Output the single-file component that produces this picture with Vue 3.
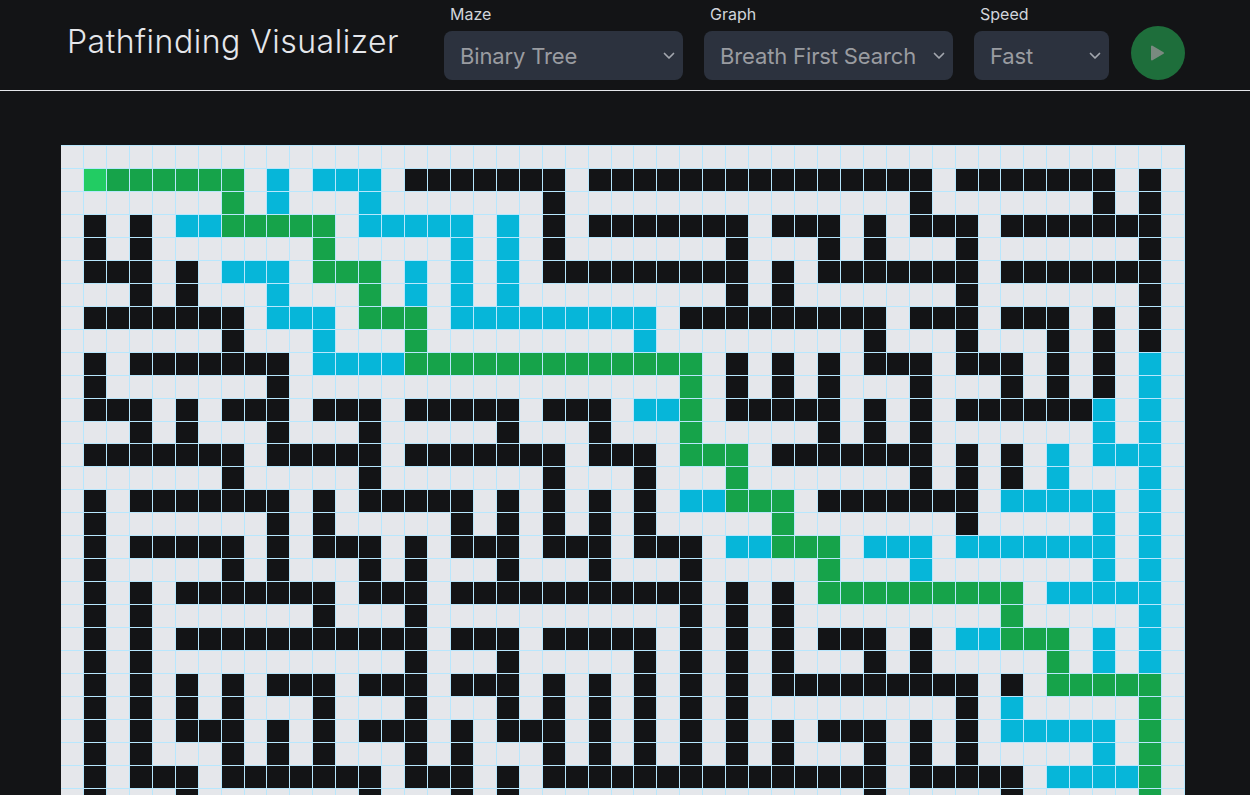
<script setup>
const COLS = 49;

// each visible row lists its wall / path / visited cells as column ranges
const rowData = [
  {},
  { w: "15-21,23-37,39-45,47", g: "2-7", b: "9,11-13" },
  { w: "21,37,45,47", g: "7", b: "9,13" },
  { w: "1,3,21,23-29,31-33,35,37-39,41-47", g: "7-11", b: "5,6,13-17,19" },
  { w: "1,3,21,29,33,35,39,47", g: "11", b: "17,19" },
  { w: "1-3,5,21-29,31,33-39,41-47", g: "11-13", b: "7-9,15,17,19" },
  { w: "3,5,29,31,39,47", g: "13", b: "9,15,17,19" },
  { w: "1-7,27-35,37-39,41-43,45,47", g: "13-15", b: "9-11,17-25" },
  { w: "7,35,39,43,45,47", g: "15", b: "11,25" },
  { w: "1,3-9,29,31,33,35-37,39-41,43,45", g: "15-27", b: "11-14,47" },
  { w: "1,9,29,31,33,37,41,43,45", g: "27", b: "47" },
  { w: "1-3,5,7-9,11-13,15-19,21-23,29-33,35,37,39-44", g: "27", b: "25,26,45,47" },
  { w: "3,5,9,13,19,23,33,35,37", g: "27", b: "45,47" },
  { w: "1-7,9-13,15-21,23-25,31-37,39,41", g: "27-29", b: "43,45-47" },
  { w: "7,13,21,25,37,39,41", g: "29", b: "43,47" },
  { w: "1,3-9,11,13-17,19,21,23,25,33-39", g: "29-31", b: "27,28,41-45,47" },
  { w: "1,9,11,17,19,21,23,25,39", g: "31", b: "45,47" },
  { w: "1,3-7,9,11-13,15,17-19,21-23,25-27", g: "31-33", b: "29,30,35-37,39-45,47" },
  { w: "1,7,9,13,15,19,23,27", g: "33", b: "37,45,47" },
  { w: "1,3,5-11,13-15,17-27,29,31", g: "33-41", b: "43-47" },
  { w: "1,3,11,15,27,29,31", g: "41", b: "47" },
  { w: "1,3,5-15,17-19,21-25,27,29,31,33-35,37", g: "41-43", b: "39,40,45,47" },
  { w: "1,3,15,19,25,27,29,31,35,37", g: "43", b: "45,47" },
  { w: "1,3,5,7,9-11,13-15,17-19,21,23,25,27,29,31-39,41", g: "43-47" },
  { w: "1,3,5,7,11,15,19,21,23,25,27,29,39", g: "47", b: "41" },
  { w: "1,3,5-7,9,11,13-15,17,19-21,23,25,27,29,31,33-35,37,39", g: "47", b: "41-45" },
  { w: "1,3,7,9,11,15,17,21,23,25,27,29,31,35,37,39", g: "47", b: "45" },
  { w: "1,3-5,7-13,15-17,19,21-35,37-41", g: "47", b: "43-46" },
  { w: "1,5,13,17,19,35,41", g: "47" },
];

const kinds = { w: "wall", g: "path", b: "visited" };

const cells = rowData.flatMap((row, r) => {
  const line = Array(COLS).fill("");
  for (const key in row) {
    row[key].split(",").forEach((part) => {
      const [from, to = from] = part.split("-").map(Number);
      for (let c = from; c <= to; c++) line[c] = kinds[key];
    });
  }
  if (r === 1) line[1] = "start";
  return line;
});

const controls = [
  { label: "Maze", value: "Binary Tree", cls: "maze" },
  { label: "Graph", value: "Breath First Search", cls: "graph" },
  { label: "Speed", value: "Fast", cls: "speed" },
];
</script>

<template>
  <div class="page">
    <header class="nav">
      <h1 class="title">Pathfinding Visualizer</h1>
      <div class="controls">
        <div v-for="item in controls" :key="item.label" class="field">
          <label class="label">{{ item.label }}</label>
          <div class="select-wrap" :class="item.cls">
            <select class="select" disabled>
              <option>{{ item.value }}</option>
            </select>
            <svg class="chevron" viewBox="0 0 12 8" width="12" height="8" fill="none">
              <path d="M1.5 1.5 6 6l4.5-4.5" stroke="currentColor" stroke-width="1.7" stroke-linecap="round" stroke-linejoin="round" />
            </svg>
          </div>
        </div>
        <button class="play" type="button" disabled aria-label="Run">
          <svg viewBox="0 0 16 18" width="16" height="18">
            <path d="M2 2.5v13L13 9z" fill="currentColor" stroke="currentColor" stroke-width="2" stroke-linejoin="round" />
          </svg>
        </button>
      </div>
    </header>
    <main class="board">
      <div class="grid">
        <div v-for="(kind, i) in cells" :key="i" class="cell" :class="kind"></div>
      </div>
    </main>
  </div>
</template>

<style scoped>
.page {
  height: 795px;
  overflow: hidden;
  background: #131416;
  font-family: Inter, "Liberation Sans", sans-serif;
}

.nav {
  display: flex;
  justify-content: space-between;
  align-items: flex-end;
  height: 91px;
  box-sizing: border-box;
  padding: 0 65px 10px 67px;
  border-bottom: 1px solid #e5e7eb;
}

.title {
  margin: 0 0 18px;
  font-size: 32px;
  line-height: 40px;
  font-weight: 300;
  letter-spacing: 0.5px;
  color: #e5e7eb;
}

.controls {
  display: flex;
  align-items: flex-end;
  gap: 21px;
}

.field {
  display: flex;
  flex-direction: column;
}

.label {
  margin: 0 0 5px 6px;
  font-size: 16px;
  line-height: 24px;
  color: #d1d5db;
}

.select-wrap {
  position: relative;
  height: 49px;
}

.maze {
  width: 239px;
}

.graph {
  width: 249px;
}

.speed {
  width: 135px;
}

.select {
  appearance: none;
  width: 100%;
  height: 100%;
  padding: 0 16px;
  border: 0;
  border-radius: 8px;
  background: #2c323e;
  color: #9a9ca1;
  opacity: 1;
  font-family: inherit;
  font-size: 22px;
  letter-spacing: -0.14px;
}

.chevron {
  position: absolute;
  right: 8px;
  top: 21px;
  color: #a3a7ae;
}

.play {
  display: flex;
  align-items: center;
  justify-content: center;
  width: 54px;
  height: 54px;
  margin-left: 1px;
  padding: 0;
  border: 0;
  border-radius: 50%;
  background: #1e6e3b;
  color: #7a8a80;
}

.board {
  padding: 54.25px 65px 0 61px;
}

.grid {
  display: grid;
  grid-template-columns: repeat(49, 1fr);
  width: 1123.5px;
}

.cell {
  aspect-ratio: 1;
  box-sizing: border-box;
  background: #e5e7eb;
  border-top: 1px solid #b8e7fd;
  border-right: 1px solid #b8e7fd;
}

.wall {
  background: #131416;
}

.path {
  background: #16a34a;
}

.start {
  background: #22cc63;
}

.visited {
  background: #06b6d9;
}
</style>

<style>
html,
body {
  margin: 0;
  overflow: hidden;
  background: #131416;
}
</style>
